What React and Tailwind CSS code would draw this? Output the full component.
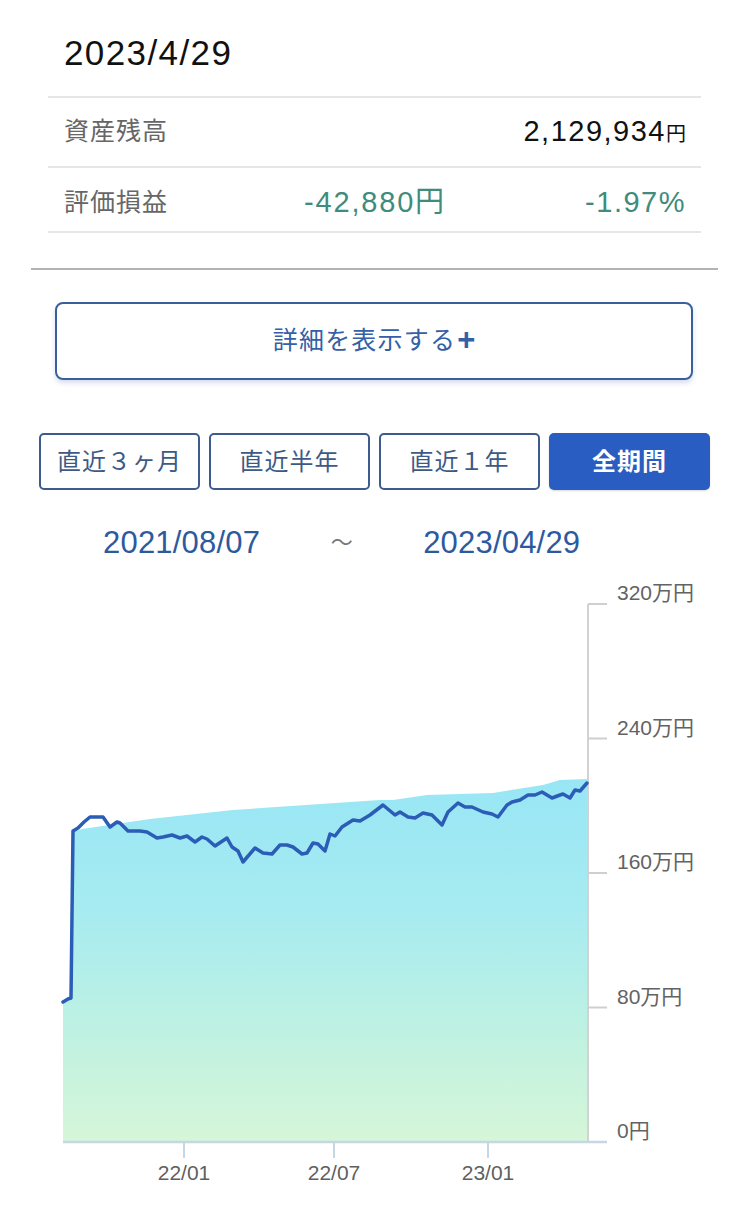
export default function App() {
  const line = [
    [63, 1002], [68, 999], [71, 998], [73, 831], [78, 828], [84, 822], [90, 817], [103, 817], [110, 827], [117, 822], [120, 823], [128, 831], [140, 831], [147, 832], [157, 838], [163, 837], [172, 835], [180, 838], [187, 836], [195, 842], [202, 837], [207, 839], [215, 846], [227, 838], [232, 847], [238, 851], [243, 862], [255, 848], [263, 853], [272, 854], [280, 845], [287, 845], [293, 847], [302, 854], [307, 853], [313, 843], [318, 844], [325, 851], [330, 834], [335, 836], [342, 827], [353, 820], [360, 821], [370, 815], [383, 805], [395, 815], [400, 812], [408, 817], [415, 818], [423, 813], [432, 815], [437, 820], [442, 825], [448, 812], [458, 803], [465, 807], [472, 807], [483, 812], [492, 814], [498, 817], [507, 805], [512, 802], [520, 800], [528, 795], [535, 795], [542, 792], [552, 798], [560, 795], [563, 794], [570, 798], [575, 790], [580, 791], [587, 783],
  ];
  const area = [
    [63, 1002], [71, 1000], [73, 832], [82, 829], [150, 819], [233, 810], [380, 800], [393, 800], [427, 795], [493, 793], [543, 785], [560, 780], [588, 779], [588, 1142], [63, 1142],
  ];
  const toPath = (pts) => pts.map((p, i) => (i ? "L" : "M") + p[0] + " " + p[1]).join(" ");
  const yTicks = [
    [604, "320万円"],
    [738.5, "240万円"],
    [873, "160万円"],
    [1007.5, "80万円"],
    [1142, "0円"],
  ];
  const xTicks = [
    [184, "22/01"],
    [334, "22/07"],
    [488, "23/01"],
  ];
  const periods = ["直近３ヶ月", "直近半年", "直近１年"];

  return (
    <div className="w-[749px] h-[1227px] bg-white overflow-hidden font-['Liberation_Sans','Noto_Sans_CJK_JP',sans-serif]">
      <div className="pt-[35px] pl-[64px] h-[70px]">
        <div className="text-[35px] leading-[35px] tracking-[1.4px] text-[#111]">2023/4/29</div>
      </div>

      <div className="mx-[48px] mt-[26px] border-t-2 border-[#e6e6e6]">
        <div className="h-[70px] flex items-center pl-[16px] pr-[15px] border-b-2 border-[#e6e6e6]">
          <span className="text-[25px] tracking-[1px] text-[#666]">資産残高</span>
          <span className="ml-auto text-[29px] tracking-[1.5px] text-[#111]">
            2,129,934<span className="text-[20px] tracking-normal">円</span>
          </span>
        </div>
        <div className="h-[65px] pt-[6px] grid grid-cols-[1fr_auto_1fr] items-center pl-[16px] pr-[15px] border-b-2 border-[#e6e6e6]">
          <span className="text-[25px] tracking-[1px] text-[#666]">評価損益</span>
          <span className="text-[29px] tracking-[1.8px] text-[#3f8b7c]">-42,880円</span>
          <span className="text-right text-[29px] tracking-[1.5px] text-[#3f8b7c]">-1.97%</span>
        </div>
      </div>

      <div className="mx-[31px] mt-[35px] h-[2px] bg-[#b3b3b3]" />

      <div className="ml-[55px] mt-[32px] w-[638px] h-[78px] rounded-[8px] border-2 border-[#3b5f9b] shadow-[0_3px_5px_rgba(60,100,180,0.22)] flex items-center justify-center text-[#3560a5]">
        <span className="text-[25px] tracking-[1.2px]">詳細を表示する</span>
        <span className="text-[31px] leading-none font-bold ml-[1px] -mt-[3px]">+</span>
      </div>

      <div className="mt-[53px] px-[39px] grid grid-cols-4 gap-[9px] h-[57px]">
        {periods.map((p) => (
          <div
            key={p}
            className="rounded-[5px] border-2 border-[#3d5b8c] flex items-center justify-center text-[24px] tracking-[1px] text-[#3d5a86]"
          >
            {p}
          </div>
        ))}
        <div className="rounded-[5px] bg-[#2a5dc2] shadow-[0_1px_2px_rgba(0,0,0,0.15)] flex items-center justify-center text-[24px] tracking-[1px] font-bold text-white">
          全期間
        </div>
      </div>

      <div className="mt-[35px] h-[35px] flex items-center pl-[103px] text-[31px] leading-[35px] text-[#2d5a9f]">
        <span className="tracking-[0.2px]">2021/08/07</span>
        <span className="w-[163px] text-center text-[22px] text-[#777]">～</span>
        <span className="tracking-[0.2px]">2023/04/29</span>
      </div>

      <svg width="749" height="667" viewBox="0 560 749 667" className="block">
        <defs>
          <linearGradient id="areaGrad" gradientUnits="userSpaceOnUse" x1="0" y1="780" x2="0" y2="1142">
            <stop offset="0" stopColor="#98e6f5" />
            <stop offset="0.35" stopColor="#a6ebf1" />
            <stop offset="0.7" stopColor="#bff1e2" />
            <stop offset="1" stopColor="#d6f6d8" />
          </linearGradient>
        </defs>
        <path d={toPath(area) + " Z"} fill="url(#areaGrad)" />
        <line x1="588" y1="604" x2="588" y2="1142" stroke="#d2d2d2" strokeWidth="2" />
        {yTicks.map(([y, label]) => (
          <g key={label}>
            <line x1="588" y1={y} x2="607" y2={y} stroke="#cfcfcf" strokeWidth="2" />
            <text x="617" y={y - 4} fontSize="21" fill="#636363">
              {label}
            </text>
          </g>
        ))}
        <line x1="63" y1="1142" x2="607" y2="1142" stroke="#c8d5e2" strokeWidth="2.5" />
        {xTicks.map(([x, label]) => (
          <g key={label}>
            <line x1={x} y1="1143" x2={x} y2="1158" stroke="#c8d5e2" strokeWidth="2" />
            <text x={x} y="1180" fontSize="21" fill="#5f5f5f" textAnchor="middle">
              {label}
            </text>
          </g>
        ))}
        <path d={toPath(line)} fill="none" stroke="#2b5cb6" strokeWidth="3.5" strokeLinejoin="round" strokeLinecap="round" />
      </svg>
    </div>
  );
}
